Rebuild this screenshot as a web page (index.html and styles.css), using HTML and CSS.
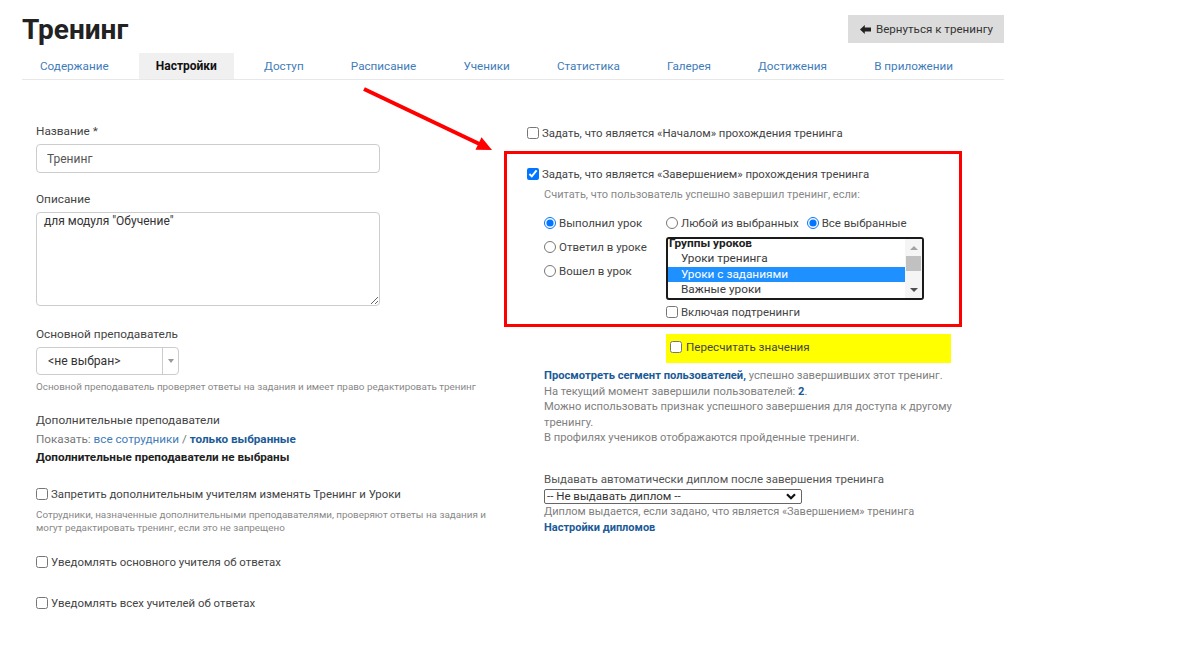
FILE: index.html
```html
<!DOCTYPE html>
<html lang="ru">

<head>
  <meta charset="UTF-8" />
  <meta name="viewport" content="width=device-width, initial-scale=1.0" />
  <title>Тренинг — Настройки</title>
  <link rel="stylesheet" href="styles.css">
</head>

<body>
  <div class="page">
    <div class="head">
      <h1>Тренинг</h1>
      <a class="back-btn" href="#">
        <svg width="11" height="9" viewBox="0 0 11 9"><path d="M0 4.5 L4.8 0 L4.8 2.5 L11 2.5 L11 6.5 L4.8 6.5 L4.8 9 Z" fill="#222"/></svg>
        Вернуться к тренингу
      </a>
    </div>

    <ul class="tabs">
      <li><a href="#">Содержание</a></li>
      <li class="active"><a href="#">Настройки</a></li>
      <li><a href="#">Доступ</a></li>
      <li><a href="#">Расписание</a></li>
      <li><a href="#">Ученики</a></li>
      <li><a href="#">Статистика</a></li>
      <li><a href="#">Галерея</a></li>
      <li><a href="#">Достижения</a></li>
      <li><a href="#">В приложении</a></li>
    </ul>

    <div class="settings">
      <!-- левая колонка -->
      <div class="col-left">
        <label class="field-label">Название *</label>
        <input class="text-input" type="text" value="Тренинг">

        <label class="field-label mt-18">Описание</label>
        <textarea class="text-area">для модуля "Обучение"</textarea>

        <label class="field-label mt-20">Основной преподаватель</label>
        <div class="chosen">
          <span class="chosen-value">&lt;не выбран&gt;</span>
          <span class="chosen-arrow"><i></i></span>
        </div>
        <div class="hint mt-5">Основной преподаватель проверяет ответы на задания и имеет право редактировать тренинг</div>

        <div class="field-label mt-19">Дополнительные преподаватели</div>
        <div class="teachers">
          <div>Показать: <a class="link" href="#">все сотрудники</a> / <a class="link-bold" href="#">только выбранные</a></div>
          <div class="strong">Дополнительные преподаватели не выбраны</div>
        </div>

        <label class="check mt-20"><input type="checkbox">Запретить дополнительным учителям изменять Тренинг и Уроки</label>
        <div class="hint hint-2">Сотрудники, назначенные дополнительными преподавателями, проверяют ответы на задания и могут редактировать тренинг, если это не запрещено</div>

        <label class="check mt-19"><input type="checkbox">Уведомлять основного учителя об ответах</label>
        <label class="check mt-25"><input type="checkbox">Уведомлять всех учителей об ответах</label>
      </div>

      <!-- правая колонка -->
      <div class="col-right">
        <label class="check"><input type="checkbox">Задать, что является «Началом» прохождения тренинга</label>

        <div class="finish-box">
          <label class="check"><input type="checkbox" checked>Задать, что является «Завершением» прохождения тренинга</label>
          <div class="sub-hint">Считать, что пользователь успешно завершил тренинг, если:</div>

          <div class="finish-grid">
            <div class="finish-actions">
              <label class="radio"><input type="radio" name="act" checked>Выполнил урок</label>
              <label class="radio"><input type="radio" name="act">Ответил в уроке</label>
              <label class="radio"><input type="radio" name="act">Вошел в урок</label>
            </div>
            <div class="finish-lessons">
              <div class="radio-row">
                <label class="radio"><input type="radio" name="mode">Любой из выбранных</label>
                <label class="radio"><input type="radio" name="mode" checked>Все выбранные</label>
              </div>
              <div class="listbox">
                <div class="listbox-items">
                  <div class="lb-group">Группы уроков</div>
                  <div class="lb-option">Уроки тренинга</div>
                  <div class="lb-option selected">Уроки с заданиями</div>
                  <div class="lb-option">Важные уроки</div>
                </div>
                <div class="listbox-scroll">
                  <i class="sb-up"></i>
                  <i class="sb-thumb"></i>
                  <i class="sb-down"></i>
                </div>
              </div>
              <label class="check mt-4"><input type="checkbox">Включая подтренинги</label>
            </div>
          </div>
        </div>

        <label class="recount"><input type="checkbox">Пересчитать значения</label>

        <div class="info">
          <a class="link-bold" href="#">Просмотреть сегмент пользователей,</a> успешно завершивших этот тренинг.<br>
          На текущий момент завершили пользователей: <a class="link-bold" href="#">2</a>.<br>
          Можно использовать признак успешного завершения для доступа к другому тренингу.<br>
          В профилях учеников отображаются пройденные тренинги.
        </div>

        <div class="diploma">
          <div class="diploma-label">Выдавать автоматически диплом после завершения тренинга</div>
          <div class="dropdown">
            <span>-- Не выдавать диплом --</span>
            <svg width="10" height="7" viewBox="0 0 10 7"><path d="M1 1.2 L5 5.2 L9 1.2" fill="none" stroke="#111" stroke-width="2.2"/></svg>
          </div>
          <div class="info-line">Диплом выдается, если задано, что является «Завершением» тренинга</div>
          <a class="link-bold info-line" href="#">Настройки дипломов</a>
        </div>
      </div>
    </div>

    <!-- стрелка-пометка поверх страницы -->
    <svg class="annot-arrow" width="145" height="80" viewBox="355 80 145 80">
      <line x1="364" y1="89" x2="480" y2="144.3" stroke="#f00" stroke-width="4"/>
      <polygon points="492,150 475.5,149.8 481.5,137.2" fill="#f00"/>
    </svg>
  </div>
</body>

</html>
```

FILE: styles.css
```css
* {
  box-sizing: border-box;
}

body {
  margin: 0;
  background: #fff;
  font-family: Roboto, "Liberation Sans", sans-serif;
  color: #333;
}

a {
  text-decoration: none;
}

.page {
  position: relative;
  width: 982px;
  margin-left: 22px;
}

/* шапка */
.head {
  display: flex;
  justify-content: space-between;
  align-items: flex-start;
  height: 46px;
}

.head h1 {
  margin: 14px 0 0;
  font-size: 28px;
  line-height: 32px;
  font-weight: 700;
  color: #222;
}

.back-btn {
  display: flex;
  align-items: center;
  gap: 5px;
  height: 28px;
  margin-top: 15px;
  padding: 0 11px 0 12px;
  background: #dcdcdc;
  color: #333;
  font-size: 11.6px;
}

/* вкладки */
.tabs {
  list-style: none;
  display: flex;
  gap: 13.2px;
  height: 27px;
  margin: 7px 0 0;
  padding: 0 0 0 1px;
  border-bottom: 1px solid #e8e8e8;
}

.tabs a {
  display: block;
  height: 26px;
  padding: 0 17px;
  line-height: 26px;
  font-size: 11.7px;
  white-space: nowrap;
  color: #3f7cba;
}

.tabs .active a {
  background: #f0f0f0;
  color: #111;
  font-size: 12px;
  font-weight: 700;
}

/* колонки */
.settings {
  display: grid;
  grid-template-columns: 481px 1fr;
  padding-top: 43px;
}

.col-left {
  padding-left: 14px;
}

.col-right {
  padding-left: 24px;
  padding-top: 2px;
}

.mt-4 { margin-top: 4px; }
.mt-5 { margin-top: 5px; }
.mt-18 { margin-top: 18px; }
.mt-19 { margin-top: 19px; }
.mt-20 { margin-top: 20px; }
.mt-25 { margin-top: 25.6px; }

.field-label {
  display: block;
  margin-bottom: 5px;
  font-size: 11.8px;
  line-height: 16px;
  color: #444;
}

div.field-label {
  margin-bottom: 0;
}

.text-input {
  display: block;
  width: 344px;
  height: 29px;
  padding: 0 10px;
  border: 1px solid #ccc;
  border-radius: 4px;
  font-family: inherit;
  font-size: 12px;
  color: #555;
}

.text-area {
  display: block;
  width: 344px;
  height: 94px;
  padding: 2px 7px;
  border: 1px solid #ccc;
  border-radius: 4px;
  font-family: inherit;
  font-size: 12px;
  line-height: 13px;
  color: #333;
}

.chosen {
  display: flex;
  width: 143px;
  height: 28px;
  border: 1px solid #ccc;
  border-radius: 4px;
  font-size: 12.2px;
}

.chosen-value {
  flex: 1;
  padding-left: 11px;
  line-height: 26px;
  color: #333;
}

.chosen-arrow {
  display: flex;
  align-items: center;
  justify-content: center;
  width: 16px;
  border-left: 1px solid #ccc;
}

.chosen-arrow i {
  border-left: 3px solid transparent;
  border-right: 3px solid transparent;
  border-top: 4px solid #999;
}

.hint {
  font-size: 9.85px;
  line-height: 13px;
  color: #888;
}

.hint-2 {
  margin-top: 6px;
  line-height: 13.4px;
}

.teachers {
  margin-top: 2px;
  font-size: 11.7px;
  line-height: 18px;
  color: #777;
}

.link {
  color: #3f7cba;
}

.link-bold {
  color: #1b5b98;
  font-weight: 700;
}

.strong {
  color: #222;
  font-weight: 700;
}

/* флажки и переключатели */
.check,
.radio {
  display: flex;
  align-items: center;
  font-size: 11.4px;
  line-height: 16px;
  white-space: nowrap;
  color: #444;
}

.check input,
.radio input {
  width: 12px;
  height: 12px;
  margin: 0 3px 0 0;
}

.radio {
  font-size: 11.5px;
}

.finish-box {
  width: 458px;
  margin: 10px 0 0 -23px;
  padding: 11.5px 0 4px 20px;
  border: 3px solid #f00;
}

.sub-hint {
  margin: 5.5px 0 0 17px;
  font-size: 11px;
  line-height: 15px;
  color: #888;
}

.finish-grid {
  display: grid;
  grid-template-columns: 122px 1fr;
  margin: 13px 0 0 17px;
}

.finish-actions .radio {
  margin-bottom: 8px;
}

.radio-row {
  display: flex;
  gap: 8px;
}

.listbox {
  display: flex;
  width: 258px;
  height: 63px;
  margin-top: 6px;
  border: 2px solid #1a1a1a;
  border-radius: 3px;
  overflow: hidden;
}

.listbox-items {
  flex: 1;
  margin-top: -3px;
  font-size: 11.8px;
  line-height: 15.4px;
  color: #3a3a3a;
}

.lb-group {
  padding-left: 1px;
  font-weight: 700;
  color: #222;
}

.lb-option {
  padding-left: 13px;
}

.lb-option.selected {
  background: #1e90ff;
  color: #fff;
}

.listbox-scroll {
  display: flex;
  flex-direction: column;
  align-items: center;
  width: 17px;
  background: #f5f5f5;
}

.sb-up {
  margin-top: 7px;
  border-left: 4px solid transparent;
  border-right: 4px solid transparent;
  border-bottom: 4px solid #a3a3a3;
}

.sb-thumb {
  width: 15px;
  height: 15px;
  margin-top: 6px;
  background: #c1c1c1;
}

.sb-down {
  margin-top: auto;
  margin-bottom: 6px;
  border-left: 4px solid transparent;
  border-right: 4px solid transparent;
  border-top: 4px solid #505050;
}

.recount {
  display: flex;
  align-items: center;
  width: 285px;
  height: 29px;
  margin: 7px 0 0 139px;
  padding: 0 0 3px 4px;
  background: #ff0;
  font-size: 11.6px;
  color: #444;
}

.recount input {
  width: 12px;
  height: 12px;
  margin: 0 4px 0 0;
}

.info {
  width: 410px;
  margin: 5px 0 0 17px;
  font-size: 11.2px;
  line-height: 15.6px;
  color: #808080;
}

.diploma {
  margin: 26px 0 0 17px;
}

.diploma-label {
  font-size: 11.5px;
  line-height: 15px;
  color: #555;
}

.dropdown {
  display: flex;
  align-items: center;
  justify-content: space-between;
  width: 258px;
  height: 15px;
  margin-top: 2px;
  padding: 0 5px 0 2px;
  border: 1px solid #666;
  border-radius: 2px;
  font-size: 11.5px;
  color: #333;
}

.info-line {
  display: block;
  font-size: 11px;
  line-height: 15px;
  color: #808080;
}

a.info-line {
  margin-top: 1px;
  color: #1b5b98;
}

/* пометка */
.annot-arrow {
  position: absolute;
  left: 333px;
  top: 80px;
}
```
